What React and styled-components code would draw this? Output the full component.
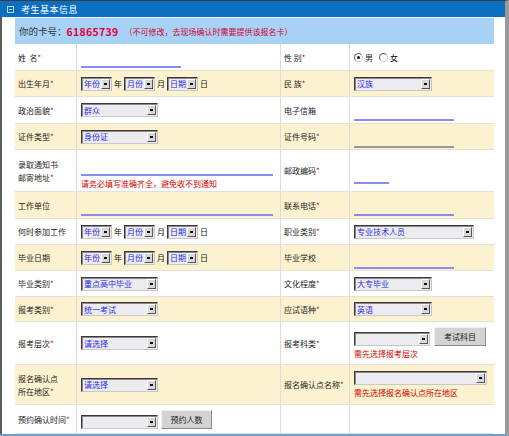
import React from "react";
import styled, { createGlobalStyle } from "styled-components";

const GlobalStyle = createGlobalStyle`
  html, body { margin: 0; padding: 0; background: #fff; }
  body { font-family: "Noto Sans CJK SC", "Noto Sans", sans-serif; }
`;

const Frame = styled.div`
  width: 509px;
  height: 436px;
  box-sizing: border-box;
  border-top: 1px solid #3c3c3c;
  border-right: 4px solid #9a9a9a;
  border-bottom: 2px solid #6d9fd0;
  display: flex;
  flex-direction: column;
  overflow: hidden;
`;

const TitleBar = styled.div`
  height: 16px;
  flex: none;
  background: #0b6fc1;
  display: flex;
  align-items: center;
  padding-left: 7px;
  gap: 7px;
  color: #fff;
  font-size: 9px;
  letter-spacing: 0.5px;
`;

const TitleIcon = styled.span`
  width: 5px;
  height: 5px;
  border: 1px solid #b9d8f4;
  position: relative;
  &::after {
    content: "";
    position: absolute;
    left: 1px;
    top: 2px;
    width: 3px;
    height: 1px;
    background: #b9d8f4;
  }
`;

const Body = styled.div`
  flex: 1;
  border-left: 2px solid #5a5a5a;
  padding: 1px 11px 0 13px;
`;

const CardRow = styled.div`
  height: 26px;
  box-sizing: border-box;
  background: #a8d1f6;
  display: flex;
  align-items: center;
  padding-left: 4px;
  font-size: 9.5px;
  color: #333;
`;

const CardNo = styled.b`
  color: #e0003a;
  font-size: 10.5px;
  letter-spacing: 0.3px;
`;

const CardNote = styled.span`
  color: #d0002a;
  font-size: 8px;
  margin-left: 6px;
`;

const Row = styled.div`
  display: grid;
  grid-template-columns: 62px 204px 69px 144px;
  height: ${(p) => p.h}px;
  box-sizing: border-box;
  background: ${(p) => (p.alt ? "#fdf2cf" : "#fff")};
  border-bottom: 1px solid #e4e0d4;
`;

const Label = styled.div`
  display: flex;
  flex-direction: column;
  justify-content: center;
  padding-left: 3px;
  font-size: 8px;
  line-height: 13px;
  color: #222;
  border-right: 1px solid #dcdcdc;
  white-space: nowrap;
`;

const Star = styled.span`
  color: #e00000;
`;

const Field = styled.div`
  display: flex;
  flex-direction: ${(p) => (p.stack ? "column" : "row")};
  justify-content: ${(p) => (p.stack ? "center" : "flex-start")};
  align-items: ${(p) => (p.stack ? "flex-start" : "center")};
  padding-left: 4px;
  gap: 3px;
  font-size: 8px;
  color: #111;
  border-right: ${(p) => (p.last ? "none" : "1px solid #dcdcdc")};
`;

const Line = styled.div`
  width: ${(p) => p.w}px;
  height: 10px;
  border-bottom: 2px solid ${(p) => (p.gray ? "#9a96a2" : "#8c8cec")};
  margin-top: ${(p) => (p.top ? p.top : 10)}px;
  flex: none;
`;

const Note = styled.div`
  color: #d40000;
  font-size: 8px;
  line-height: 10px;
  white-space: nowrap;
`;

const Sel = styled.div`
  width: ${(p) => p.w}px;
  height: 14px;
  box-sizing: border-box;
  display: flex;
  align-items: center;
  flex: none;
  border: 1px solid;
  border-color: #3a3a3a #c8c8c8 #c8c8c8 #3a3a3a;
  background: #ececf0;
  font-size: 8px;
  color: #2a2ae6;
  padding-left: 2px;
  box-shadow: inset 1px 1px 0 #8a8a8a;
`;

const SelText = styled.span`
  flex: 1;
  white-space: nowrap;
  overflow: hidden;
`;

const Arrow = styled.span`
  width: 9px;
  height: 10px;
  margin-right: 1px;
  background: #d8d8d8;
  border: 1px solid;
  border-color: #fff #555 #555 #fff;
  box-sizing: border-box;
  display: flex;
  align-items: center;
  justify-content: center;
  &::after {
    content: "";
    width: 3px;
    height: 2px;
    background: #111;
  }
`;

const Select = ({ w, children }) => (
  <Sel w={w}>
    <SelText>{children}</SelText>
    <Arrow />
  </Sel>
);

const Button = styled.div`
  width: ${(p) => p.w}px;
  height: 19px;
  box-sizing: border-box;
  flex: none;
  background: #d3d3d3;
  border: 1px solid;
  border-color: #f0f0f0 #8a8a8a #8a8a8a #f0f0f0;
  font-size: 8px;
  color: #222;
  display: flex;
  align-items: flex-start;
  justify-content: center;
  padding-top: 3px;
`;

const Inline = styled.div`
  display: flex;
  align-items: ${(p) => p.align || "center"};
  gap: ${(p) => (p.gap ? p.gap : 3)}px;
`;

const Radio = styled.span`
  width: 7px;
  height: 7px;
  border-radius: 50%;
  border: 1px solid;
  border-color: #666 #ccc #ccc #666;
  background: #fff;
  display: inline-flex;
  align-items: center;
  justify-content: center;
  margin-right: 2px;
  &::after {
    content: "";
    width: 3px;
    height: 3px;
    border-radius: 50%;
    background: ${(p) => (p.on ? "#111" : "transparent")};
  }
`;

const Choice = styled.span`
  display: inline-flex;
  align-items: center;
  margin-right: 3px;
`;

const DateSel = () => (
  <Inline gap={2}>
    <Select w={31}>年份</Select>年
    <Select w={31}>月份</Select>月
    <Select w={31}>日期</Select>日
  </Inline>
);

const Req = ({ children }) => (
  <span>
    {children}
    <Star>*</Star>
  </span>
);

export default function App() {
  return (
    <>
      <GlobalStyle />
      <Frame>
        <TitleBar>
          <TitleIcon />
          考生基本信息
        </TitleBar>
        <Body>
          <CardRow>
            你的卡号：<CardNo>61865739</CardNo>
            <CardNote>（不可修改，去现场确认时需要提供该报名卡）</CardNote>
          </CardRow>

          <Row h={27}>
            <Label><Req>姓&nbsp;&nbsp;名</Req></Label>
            <Field><Line w={100} /></Field>
            <Label><Req>性&nbsp;别</Req></Label>
            <Field last>
              <Choice><Radio on />男</Choice>
              <Choice><Radio />女</Choice>
            </Field>
          </Row>

          <Row h={26} alt>
            <Label><Req>出生年月</Req></Label>
            <Field><DateSel /></Field>
            <Label><Req>民&nbsp;族</Req></Label>
            <Field last><Select w={78}>汉族</Select></Field>
          </Row>

          <Row h={27}>
            <Label><Req>政治面貌</Req></Label>
            <Field><Select w={77}>群众</Select></Field>
            <Label>电子信箱</Label>
            <Field last><Line w={100} /></Field>
          </Row>

          <Row h={26} alt>
            <Label><Req>证件类型</Req></Label>
            <Field><Select w={77}>身份证</Select></Field>
            <Label><Req>证件号码</Req></Label>
            <Field last><Line w={100} gray /></Field>
          </Row>

          <Row h={42}>
            <Label>
              <span>录取通知书</span>
              <Req>邮寄地址</Req>
            </Label>
            <Field stack>
              <Line w={192} top={11} />
              <Note>请务必填写准确齐全，避免收不到通知</Note>
            </Field>
            <Label><Req>邮政编码</Req></Label>
            <Field last><Line w={35} top={14} /></Field>
          </Row>

          <Row h={27} alt>
            <Label>工作单位</Label>
            <Field><Line w={192} /></Field>
            <Label><Req>联系电话</Req></Label>
            <Field last><Line w={100} /></Field>
          </Row>

          <Row h={26}>
            <Label>何时参加工作</Label>
            <Field><DateSel /></Field>
            <Label><Req>职业类别</Req></Label>
            <Field last><Select w={120}>专业技术人员</Select></Field>
          </Row>

          <Row h={26} alt>
            <Label>毕业日期</Label>
            <Field><DateSel /></Field>
            <Label>毕业学校</Label>
            <Field last><Line w={100} /></Field>
          </Row>

          <Row h={26}>
            <Label><Req>毕业类别</Req></Label>
            <Field><Select w={77}>重点高中毕业</Select></Field>
            <Label><Req>文化程度</Req></Label>
            <Field last><Select w={78}>大专毕业</Select></Field>
          </Row>

          <Row h={25} alt>
            <Label><Req>报考类别</Req></Label>
            <Field><Select w={77}>统一考试</Select></Field>
            <Label><Req>应试语种</Req></Label>
            <Field last><Select w={78}>英语</Select></Field>
          </Row>

          <Row h={43}>
            <Label><Req>报考层次</Req></Label>
            <Field><Select w={77}>请选择</Select></Field>
            <Label><Req>报考科类</Req></Label>
            <Field stack last>
              <Inline align="flex-end" gap={4}>
                <Select w={76} />
                <Button w={52}>考试科目</Button>
              </Inline>
              <Note>需先选择报考层次</Note>
            </Field>
          </Row>

          <Row h={40} alt>
            <Label>
              <span>报名确认点</span>
              <Req>所在地区</Req>
            </Label>
            <Field><Select w={77}>请选择</Select></Field>
            <Label><Req>报名确认点名称</Req></Label>
            <Field stack last>
              <Select w={133} />
              <Note>需先选择报名确认点所在地区</Note>
            </Field>
          </Row>

          <Row h={29}>
            <Label><Req>预约确认时间</Req></Label>
            <Field>
              <Inline align="flex-end" gap={3}>
                <Select w={77} />
                <Button w={51}>预约人数</Button>
              </Inline>
            </Field>
            <Label />
            <Field last />
          </Row>
        </Body>
      </Frame>
    </>
  );
}
